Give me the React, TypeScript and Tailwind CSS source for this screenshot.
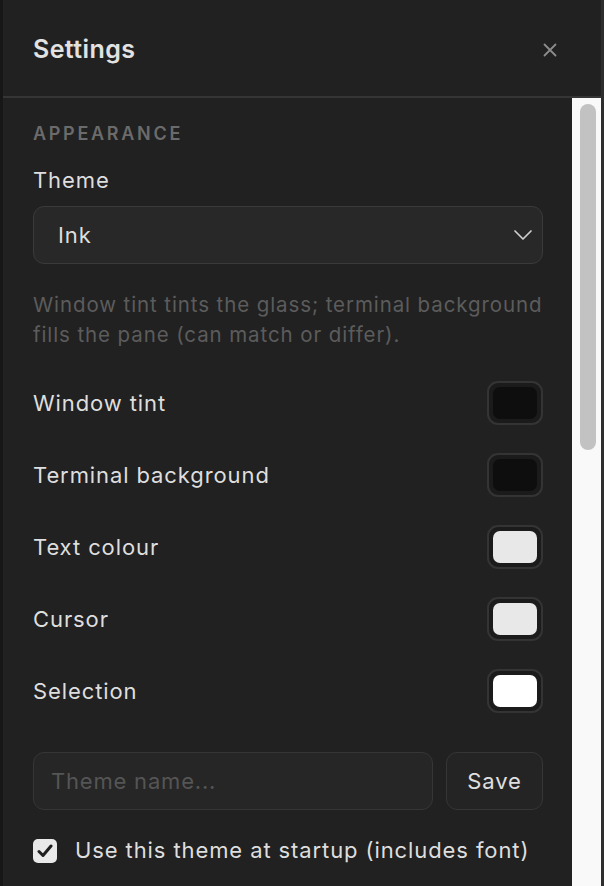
import React from "react";

const colours = [
  { label: "Window tint", value: "#0e0e0e" },
  { label: "Terminal background", value: "#0e0e0e" },
  { label: "Text colour", value: "#e8e8e8" },
  { label: "Cursor", value: "#e8e8e8" },
  { label: "Selection", value: "#ffffff" },
];

const Swatch: React.FC<{ value: string }> = ({ value }) => (
  <div className="w-[56px] h-[44px] rounded-[11px] border-2 border-[#343434] bg-[#1b1b1b] p-[4px]">
    <div className="w-full h-full rounded-[7px]" style={{ backgroundColor: value }} />
  </div>
);

const App: React.FC = () => {
  return (
    <div
      className="w-[604px] h-[886px] flex flex-col bg-[#212121] border-l-[3px] border-l-[#171717] border-r-[3px] border-r-[#2e2e2e] text-[#dedede] overflow-hidden"
      style={{ fontFamily: "Inter, 'Noto Sans', sans-serif" }}
    >
      {/* Header */}
      <div className="h-[98px] shrink-0 flex items-center justify-between pt-[4px] pl-[30px] pr-[44px] border-b-2 border-[#353535]">
        <h1 className="text-[25px] font-semibold text-[#e2e2e2] tracking-[0.4px]">Settings</h1>
        <button className="text-[#8c8c8c]">
          <svg width="14" height="14" viewBox="0 0 14 14" fill="none" stroke="currentColor" strokeWidth="1.8" strokeLinecap="round">
            <path d="M1.5 1.5 L12.5 12.5 M12.5 1.5 L1.5 12.5" />
          </svg>
        </button>
      </div>

      {/* Body */}
      <div className="flex flex-1 min-h-0">
        <div className="flex-1 pl-[30px] pr-[29px] pt-[24px] flex flex-col tracking-[0.9px]">
          <div className="text-[18px] leading-[24px] font-semibold tracking-[2.7px] text-[#6b6b6b]">APPEARANCE</div>
          <div className="mt-[20px] text-[22px] leading-[28px]">Theme</div>
          <div className="mt-[12px] h-[58px] rounded-[11px] border-[1.5px] border-[#3a3a3a] bg-[#282828] flex items-center justify-between pl-[24px] pr-[9px]">
            <span className="text-[22px]">Ink</span>
            <svg width="20" height="12" viewBox="0 0 20 12" fill="none" stroke="#cfcfcf" strokeWidth="1.7" strokeLinecap="round" strokeLinejoin="round">
              <path d="M2 2 L10 10 L18 2" />
            </svg>
          </div>
          <p className="mt-[26px] text-[20.5px] leading-[30px] tracking-[0.9px] text-[#5c5c5c]">
            Window tint tints the glass; terminal background fills the pane (can match or differ).
          </p>

          <div className="mt-[31px] flex flex-col gap-[28px]">
            {colours.map((c) => (
              <div key={c.label} className="flex items-center justify-between">
                <span className="text-[22px]">{c.label}</span>
                <Swatch value={c.value} />
              </div>
            ))}
          </div>

          <div className="mt-[39px] flex gap-[13px] h-[58px]">
            <input
              type="text"
              placeholder="Theme name..."
              className="flex-1 min-w-0 rounded-[11px] border-[1.5px] border-[#363636] bg-[#262626] px-[17px] text-[22px] tracking-[0.8px] text-[#dedede] placeholder-[#555555] outline-none"
            />
            <button className="w-[97px] rounded-[11px] border-[1.5px] border-[#363636] bg-[#242424] text-[22px] text-[#e0e0e0]">
              Save
            </button>
          </div>

          <label className="mt-[24px] flex items-center gap-[18px]">
            <span className="w-[24px] h-[24px] rounded-[5px] bg-[#e9e9e9] flex items-center justify-center">
              <svg width="16" height="14" viewBox="0 0 16 14" fill="none" stroke="#1e1e1e" strokeWidth="3" strokeLinecap="round" strokeLinejoin="round">
                <path d="M2 7.5 L6 11.5 L14 2" />
              </svg>
            </span>
            <span className="text-[22px]">Use this theme at startup (includes font)</span>
          </label>
        </div>

        {/* Scrollbar */}
        <div className="w-[29px] shrink-0 bg-[#f9f9f9] pl-[8px] pr-[5px] pt-[6px]">
          <div className="h-[346px] rounded-full bg-[#c2c2c2]" />
        </div>
      </div>
    </div>
  );
};

export default App;
